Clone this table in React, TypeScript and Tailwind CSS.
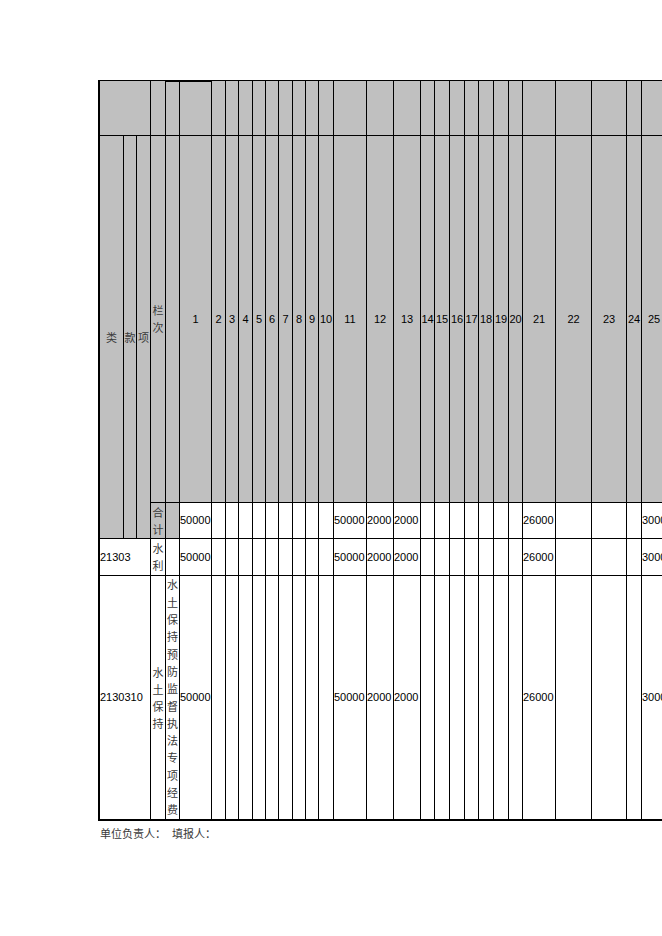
import React from "react";

const cjk = "font-['Noto_Sans_CJK_SC','Noto_Sans_CJK_JP',sans-serif]";
const num = "font-['Liberation_Sans',Arial,sans-serif]";

const dataCols = Array.from({ length: 25 }, (_, i) => i + 1);
const values: Record<number, string> = { 1: "50000", 11: "50000", 12: "2000", 13: "2000", 21: "26000", 25: "3000" };

function Stack({ text, lh }: { text: string; lh: string }) {
  return (
    <div className={`flex flex-col items-center ${cjk} text-[11px] text-[#3a3a3a] ${lh}`}>
      {text.split("").map((c, i) => (
        <span key={i}>{c}</span>
      ))}
    </div>
  );
}

export default function App() {
  const gray = "bg-[#c0c0c0]";
  return (
    <div className="w-[662px] h-[936px] overflow-hidden bg-white">
      <div className="pt-[80px] pl-[98px]">
        <div className="grid w-max bg-black pl-[2px] pt-px pb-[2px] pr-px gap-px grid-cols-[23px_12px_13px_14px_13px_31px_13px_12px_13px_12px_12px_13px_12px_12px_14px_32px_26px_26px_13px_14px_14px_13px_14px_14px_13px_32px_35px_34px_14px_24px] grid-rows-[54px_366px_35px_36px_243px]">
          {/* Row 1 */}
          <div className={`${gray} col-[1/4] row-[1]`} />
          <div className={`${gray} col-[4] row-[1]`} />
          <div className={`${gray} col-[5] row-[1] border-t border-black`} />
          {dataCols.map((c) => (
            <div
              key={"r1" + c}
              className={`${gray} row-[1] ${c === 1 ? "border-t border-black" : ""}`}
              style={{ gridColumn: c + 5 }}
            />
          ))}

          {/* Row 2-3 header */}
          <div className={`${gray} col-[1] row-[2/4] flex items-center justify-center ${cjk} text-[11px] text-[#3a3a3a]`}>类</div>
          <div className={`${gray} col-[2] row-[2/4] flex items-center justify-center ${cjk} text-[11px] text-[#3a3a3a]`}>款</div>
          <div className={`${gray} col-[3] row-[2/4] flex items-center justify-center ${cjk} text-[11px] text-[#3a3a3a]`}>项</div>
          <div className={`${gray} col-[4] row-[2] flex items-center justify-center`}>
            <Stack text="栏次" lh="leading-[17px]" />
          </div>
          <div className={`${gray} col-[5] row-[2]`} />
          {dataCols.map((c) => (
            <div
              key={"r2" + c}
              className={`${gray} row-[2] flex items-center justify-center ${num} text-[11px] text-black`}
              style={{ gridColumn: c + 5 }}
            >
              {c}
            </div>
          ))}

          {/* Row 3 合计 */}
          <div className={`${gray} col-[4] row-[3] flex items-center justify-center`}>
            <Stack text="合计" lh="leading-[17px]" />
          </div>
          <div className={`${gray} col-[5] row-[3]`} />
          {dataCols.map((c) => (
            <div
              key={"r3" + c}
              className={`bg-white row-[3] flex items-center ${num} text-[11px] text-black whitespace-nowrap`}
              style={{ gridColumn: c + 5 }}
            >
              {values[c] ?? ""}
            </div>
          ))}

          {/* Row 4 21303 */}
          <div className={`bg-white col-[1/4] row-[4] flex items-center ${num} text-[11px] text-black`}>21303</div>
          <div className="bg-white col-[4] row-[4] flex items-center justify-center">
            <Stack text="水利" lh="leading-[17px]" />
          </div>
          <div className="bg-white col-[5] row-[4]" />
          {dataCols.map((c) => (
            <div
              key={"r4" + c}
              className={`bg-white row-[4] flex items-center ${num} text-[11px] text-black whitespace-nowrap`}
              style={{ gridColumn: c + 5 }}
            >
              {values[c] ?? ""}
            </div>
          ))}

          {/* Row 5 2130310 */}
          <div className={`bg-white col-[1/4] row-[5] flex items-center ${num} text-[11px] text-black`}>2130310</div>
          <div className="bg-white col-[4] row-[5] flex items-center justify-center">
            <Stack text="水土保持" lh="leading-[17px]" />
          </div>
          <div className="bg-white col-[5] row-[5] flex items-center justify-center">
            <Stack text="水土保持预防监督执法专项经费" lh="leading-[17.3px]" />
          </div>
          {dataCols.map((c) => (
            <div
              key={"r5" + c}
              className={`bg-white row-[5] flex items-center ${num} text-[11px] text-black whitespace-nowrap`}
              style={{ gridColumn: c + 5 }}
            >
              {values[c] ?? ""}
            </div>
          ))}
        </div>
        <div className={`mt-[5px] pl-[2px] flex ${cjk} text-[11px] leading-[14px] text-[#3a3a3a]`}>
          <span>单位负责人：</span>
          <span className="ml-[6px]">填报人：</span>
        </div>
      </div>
    </div>
  );
}
